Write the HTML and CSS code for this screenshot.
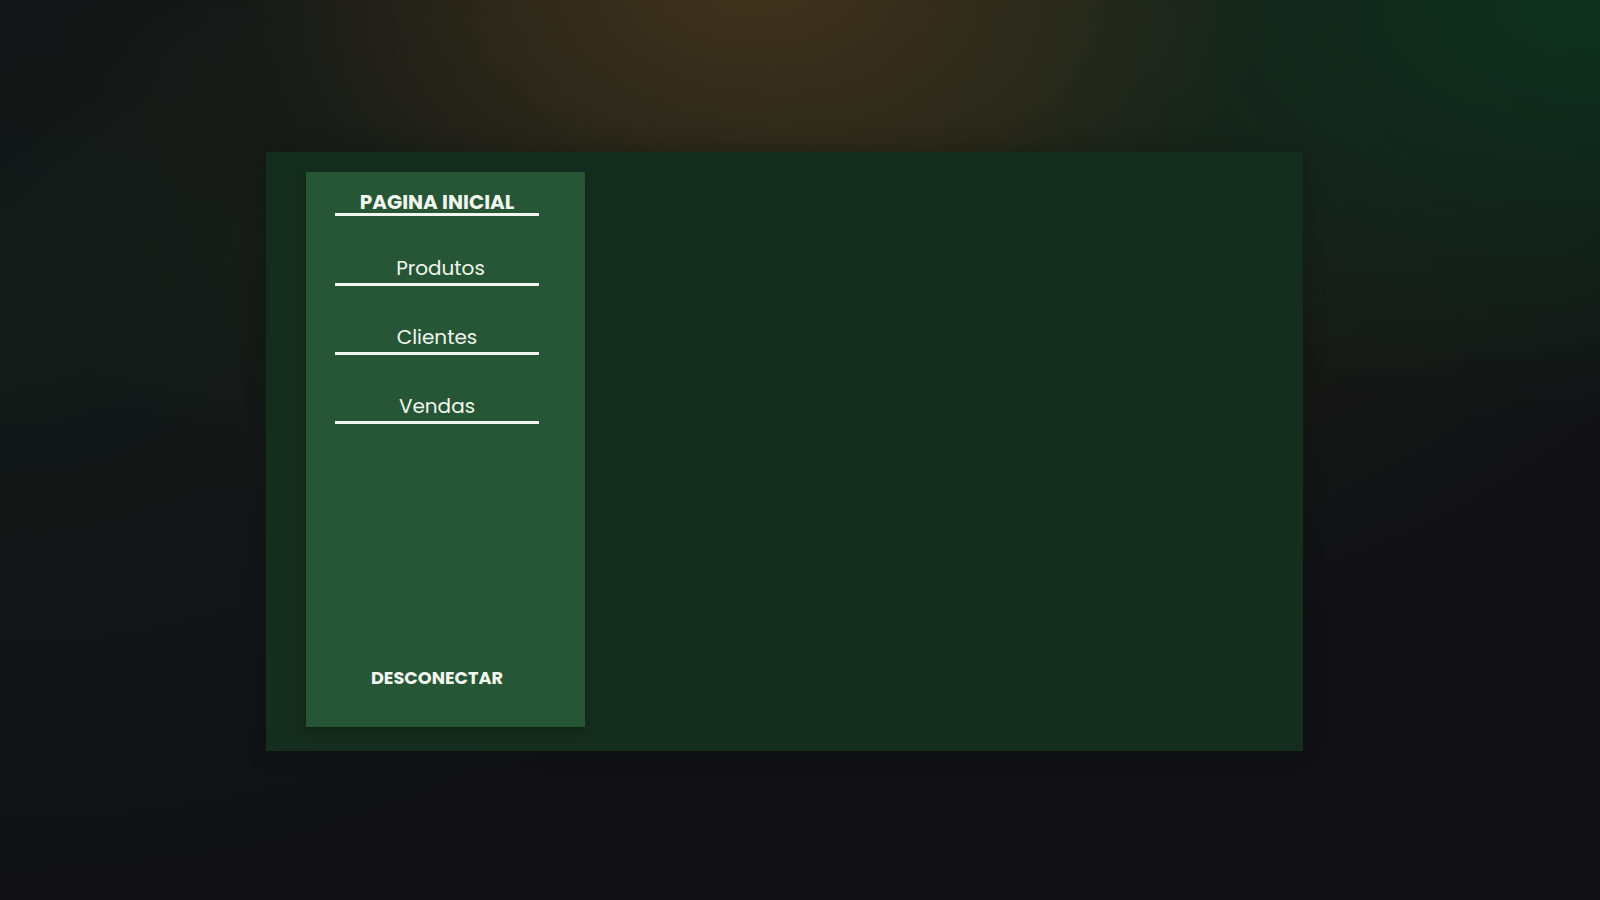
FILE: index.html
```html
<!DOCTYPE html>
<html lang="pt-BR">
<head>
<meta charset="utf-8">
<title>Pagina Inicial</title>
<link rel="stylesheet" href="styles.css">
</head>
<body>
<div class="stage">
  <div class="panel">
    <aside class="sidebar">
      <nav class="menu">
        <a class="menu-item menu-item--active" href="#">PAGINA INICIAL</a>
        <a class="menu-item menu-item--shift" href="#">Produtos</a>
        <a class="menu-item" href="#">Clientes</a>
        <a class="menu-item" href="#">Vendas</a>
      </nav>
      <a class="logout" href="#">DESCONECTAR</a>
    </aside>
    <main class="content"></main>
  </div>
</div>
</body>
</html>
```
FILE: styles.css
```css
* { box-sizing: border-box; }

html, body {
  margin: 0;
  height: 100%;
}

body {
  font-family: Poppins, Inter, "Noto Sans", sans-serif;
  color: #f1f6ee;
  background-color: #111114;
  background-image:
    radial-gradient(ellipse 520px 300px at 755px -20px, rgba(72, 56, 30, 0.85), rgba(72, 56, 30, 0) 100%),
    radial-gradient(ellipse 700px 420px at 1600px 0px, rgba(14, 52, 32, 0.95), rgba(14, 52, 32, 0) 100%),
    radial-gradient(ellipse 900px 520px at 900px 150px, rgba(40, 46, 28, 0.6), rgba(40, 46, 28, 0) 100%),
    radial-gradient(ellipse 900px 600px at 0px 300px, rgba(20, 32, 26, 0.65), rgba(20, 32, 26, 0) 100%);
  overflow: hidden;
}

.stage {
  padding: 152px 0 0 266px;
}

.panel {
  width: 1037px;
  height: 599px;
  background: #152d1e;
  display: flex;
  padding: 20px 0 24px 40px;
  box-shadow: 0 0 18px rgba(10, 20, 12, 0.35);
}

.sidebar {
  width: 279px;
  background: #275636;
  display: flex;
  flex-direction: column;
  justify-content: space-between;
  padding: 17px 0 37px 29px;
  box-shadow: 0 4px 10px rgba(0, 0, 0, 0.25);
}

.menu {
  display: flex;
  flex-direction: column;
  gap: 39px;
  width: 204px;
}

.menu-item {
  display: block;
  text-align: center;
  color: #f1f6ee;
  text-decoration: none;
  font-size: 20px;
  line-height: 24px;
  padding-bottom: 3px;
  border-bottom: 3px solid #f1f6ee;
}

.menu-item--active {
  font-weight: 700;
  padding-top: 3px;
  padding-bottom: 0;
  line-height: 21px;
  margin-bottom: 1px;
}

.menu-item--shift {
  padding-left: 7px;
}

.logout {
  width: 204px;
  text-align: center;
  color: #f1f6ee;
  text-decoration: none;
  font-weight: 700;
  font-size: 17.7px;
  line-height: 24px;
}

.content {
  flex: 1;
}
```
